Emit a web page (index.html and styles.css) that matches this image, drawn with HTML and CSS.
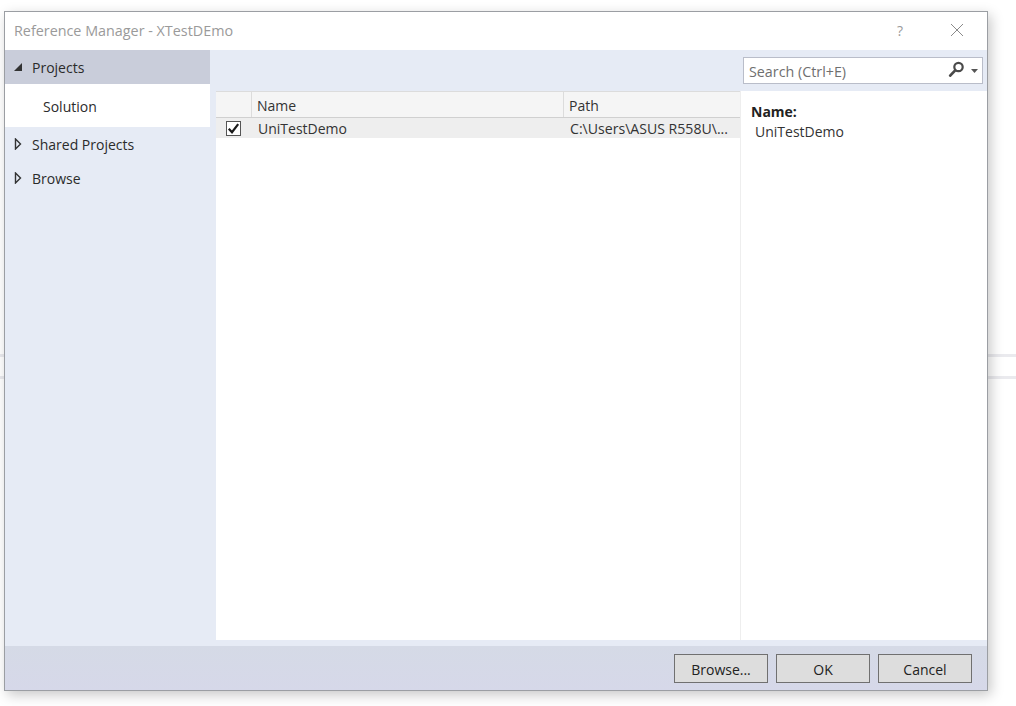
FILE: index.html
```html
<!DOCTYPE html>
<html lang="en">
<head>
<meta charset="utf-8">
<title>Reference Manager - XTestDEmo</title>
<link rel="stylesheet" href="styles.css">
</head>
<body>
<div class="desk-line desk-line-a"></div>
<div class="desk-line desk-line-b"></div>
<div class="dialog">
  <header class="titlebar">
    <span class="title">Reference Manager - XTestDEmo</span>
    <div class="win-controls">
      <span class="help">?</span>
      <svg class="close" width="14" height="14" viewBox="0 0 14 14"><path d="M1 1 L13 13 M13 1 L1 13" stroke="#8a8a8a" stroke-width="1" fill="none"/></svg>
    </div>
  </header>
  <div class="body">
    <nav class="sidebar">
      <div class="nav-item nav-active">
        <svg class="arrow" width="10" height="10" viewBox="0 0 10 10"><path d="M9 1 V9 H1 Z" fill="#333"/></svg>
        <span>Projects</span>
      </div>
      <div class="nav-sub">Solution</div>
      <div class="nav-item">
        <svg class="arrow" width="10" height="12" viewBox="0 0 10 12"><path d="M2.5 1 L7.5 6 L2.5 11 Z" fill="none" stroke="#333" stroke-width="1.4"/></svg>
        <span>Shared Projects</span>
      </div>
      <div class="nav-item">
        <svg class="arrow" width="10" height="12" viewBox="0 0 10 12"><path d="M2.5 1 L7.5 6 L2.5 11 Z" fill="none" stroke="#333" stroke-width="1.4"/></svg>
        <span>Browse</span>
      </div>
    </nav>
    <main class="main">
      <div class="toolbar">
        <div class="search">
          <span class="search-text">Search (Ctrl+E)</span>
          <svg class="search-icon" width="18" height="17" viewBox="0 0 18 17"><circle cx="10.5" cy="6" r="4.2" fill="none" stroke="#4a4a4a" stroke-width="2.2"/><path d="M7.2 9.4 L2.2 14.6" stroke="#4a4a4a" stroke-width="2.8" stroke-linecap="round"/></svg>
          <svg class="search-drop" width="7" height="4" viewBox="0 0 7 4"><path d="M0 0 H7 L3.5 4 Z" fill="#555"/></svg>
        </div>
      </div>
      <div class="panes">
        <section class="list">
          <div class="list-head">
            <div class="col-check"></div>
            <div class="col-name">Name</div>
            <div class="col-path">Path</div>
          </div>
          <div class="list-row">
            <div class="cell-check">
              <span class="checkbox"><svg width="13" height="13" viewBox="0 0 13 13"><path d="M1.8 6.8 L5 10.2 L11.2 2.2" fill="none" stroke="#1a1a1a" stroke-width="2.2"/></svg></span>
            </div>
            <div class="cell-name">UniTestDemo</div>
            <div class="cell-path">C:\Users\ASUS R558U\...</div>
          </div>
        </section>
        <aside class="details">
          <div class="details-label">Name:</div>
          <div class="details-value">UniTestDemo</div>
        </aside>
      </div>
    </main>
  </div>
  <footer class="footer">
    <button class="btn">Browse...</button>
    <button class="btn">OK</button>
    <button class="btn">Cancel</button>
  </footer>
</div>
</body>
</html>
```
FILE: styles.css
```css
* { box-sizing: border-box; }
html, body { margin: 0; height: 100%; }
body {
  background: #fff;
  font-family: "Open Sans", "Noto Sans", sans-serif;
  font-size: 14px;
  color: #222;
  padding: 11px 0 0 4px;
  overflow: hidden;
}
.desk-line { position: absolute; left: 0; right: 0; height: 3px; background: #eaeaee; }
.desk-line-a { top: 354px; }
.desk-line-b { top: 376px; }
.dialog {
  position: relative;
  width: 984px;
  height: 680px;
  border: 1px solid #9b9ea3;
  background: #e6ebf5;
  display: flex;
  flex-direction: column;
  box-shadow: 3px 4px 12px rgba(0,0,0,.22);
}
.titlebar {
  height: 38px;
  flex: none;
  background: #fff;
  display: flex;
  align-items: center;
  justify-content: space-between;
  padding: 0 23px 2px 9px;
}
.title { color: #9a9a9a; font-size: 14.35px; }
.win-controls { display: flex; align-items: center; gap: 47px; }
.help { color: #9a9a9a; font-size: 14px; }
.close { display: block; }
.body { flex: 1; display: flex; min-height: 0; }
.sidebar { width: 205px; flex: none; }
.nav-item {
  height: 34px;
  display: flex;
  align-items: center;
  gap: 9px;
  padding-left: 8px;
  color: #2b2b2b;
}
.nav-active { background: #c9cdda; }
.nav-sub {
  height: 43px;
  background: #fff;
  padding: 2px 0 0 38px;
  display: flex;
  align-items: center;
  color: #2b2b2b;
}
.arrow { flex: none; }
.main { flex: 1; display: flex; flex-direction: column; min-width: 0; }
.toolbar {
  height: 41px;
  flex: none;
  display: flex;
  justify-content: flex-end;
  padding: 7px 4px 0 0;
}
.search {
  width: 240px;
  height: 27px;
  background: #fff;
  border: 1px solid #b9bdc9;
  display: flex;
  align-items: center;
  padding: 0 4px 0 5px;
}
.search-text { flex: 1; color: #6f6f6f; font-size: 14.3px; padding-top: 2px; }
.search-icon { margin: -2px 5px 0 0; }
.panes { flex: 1; display: flex; margin: 0 0 6px 6px; background: #fff; min-height: 0; }
.list { width: 525px; flex: none; border-right: 1px solid #eeeeee; }
.list-head {
  height: 27px;
  display: flex;
  background: #f5f5f5;
  border-top: 1px solid #dcdcdc;
  border-bottom: 1px solid #d0d0d0;
  color: #333;
}
.col-check { width: 36px; border-right: 1px solid #dcdcdc; }
.col-name { width: 312px; padding: 4px 0 0 5px; border-right: 1px solid #dcdcdc; }
.col-path { flex: 1; padding: 4px 0 0 5px; }
.list-row { height: 20px; display: flex; align-items: center; background: #eeeeee; color: #333; }
.cell-check { width: 36px; display: flex; justify-content: center; padding-right: 1px; }
.checkbox {
  width: 15px;
  height: 15px;
  border: 1px solid #555;
  background: #fff;
  display: flex;
}
.cell-name { width: 312px; padding-left: 6px; }
.cell-path { flex: 1; padding-left: 6px; white-space: nowrap; overflow: hidden; font-size: 14.1px; }
.details { flex: 1; padding: 11px 10px 0 10px; }
.details-label { font-weight: 700; color: #222; line-height: 20px; }
.details-value { padding-left: 4px; line-height: 20px; color: #333; }
.footer {
  height: 44px;
  flex: none;
  background: linear-gradient(#d5dae6, #d6d8e9);
  display: flex;
  justify-content: flex-end;
  gap: 8px;
  padding: 8px 15px 0 0;
}
.btn {
  width: 94px;
  height: 29px;
  background: #dddddd;
  border: 1px solid #707070;
  font: inherit;
  color: #222;
  padding: 2px 0 0;
}
```
